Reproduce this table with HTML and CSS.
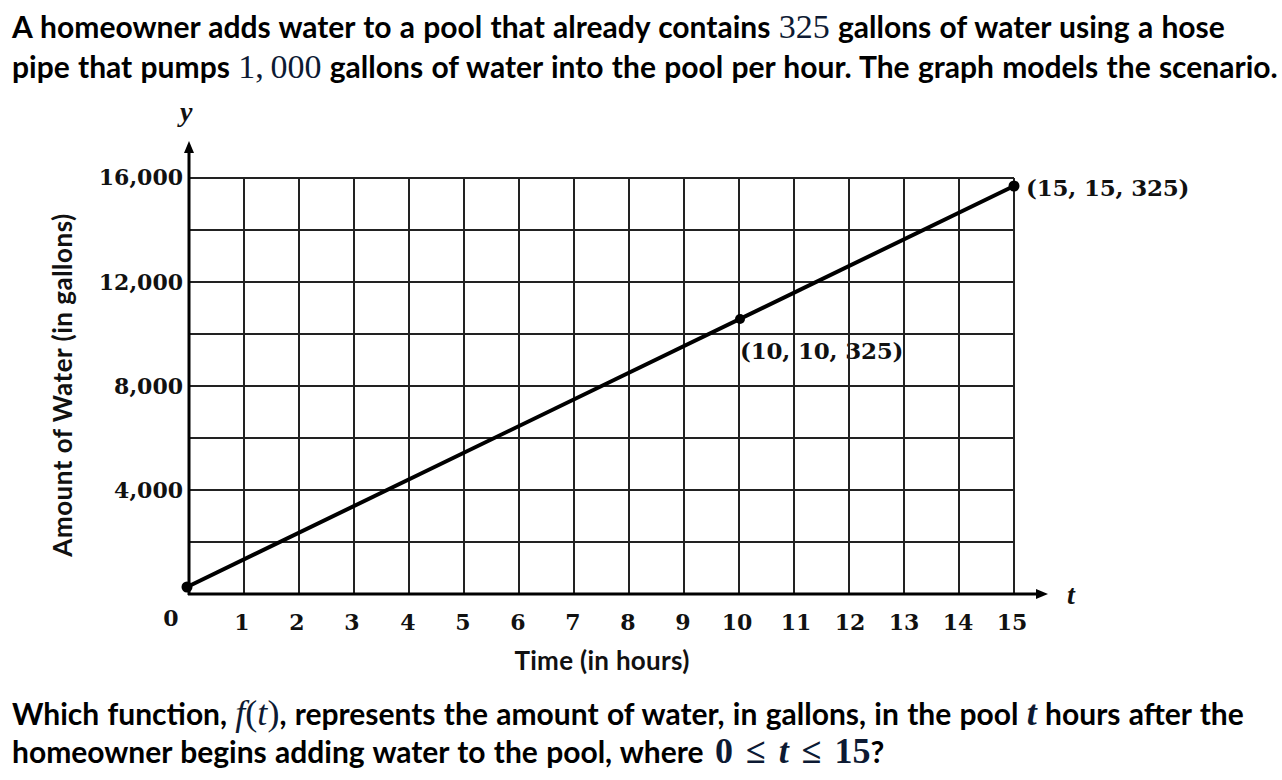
FILE: index.html
```html
<!DOCTYPE html>
<html>
<head>
<meta charset="utf-8">
<link rel="stylesheet" href="styles.css">
</head>
<body>
<div class="page">
  <p class="q q-top">A homeowner adds water to a pool that already contains <span class="m">325</span> gallons of water using a hose<br>pipe that pumps <span class="m">1,&thinsp;000</span> gallons of water into the pool per hour. The graph models the scenario.</p>
  <svg class="graph" width="1282" height="608" viewBox="0 86 1282 608" xmlns="http://www.w3.org/2000/svg">
    <g class="pt-label">
      <text x="1026" y="196">(15, 15, 325)</text>
      <text x="740" y="359">(10, 10, 325)</text>
    </g>
    <g class="grid">
      <line x1="244" y1="178" x2="244" y2="594"/>
      <line x1="299" y1="178" x2="299" y2="594"/>
      <line x1="354" y1="178" x2="354" y2="594"/>
      <line x1="409" y1="178" x2="409" y2="594"/>
      <line x1="464" y1="178" x2="464" y2="594"/>
      <line x1="519" y1="178" x2="519" y2="594"/>
      <line x1="574" y1="178" x2="574" y2="594"/>
      <line x1="629" y1="178" x2="629" y2="594"/>
      <line x1="684" y1="178" x2="684" y2="594"/>
      <line x1="739" y1="178" x2="739" y2="594"/>
      <line x1="794" y1="178" x2="794" y2="594"/>
      <line x1="849" y1="178" x2="849" y2="594"/>
      <line x1="904" y1="178" x2="904" y2="594"/>
      <line x1="959" y1="178" x2="959" y2="594"/>
      <line x1="1014" y1="178" x2="1014" y2="594"/>
      <line x1="189" y1="178" x2="1014" y2="178"/>
      <line x1="189" y1="230" x2="1014" y2="230"/>
      <line x1="189" y1="282" x2="1014" y2="282"/>
      <line x1="189" y1="334" x2="1014" y2="334"/>
      <line x1="189" y1="386" x2="1014" y2="386"/>
      <line x1="189" y1="438" x2="1014" y2="438"/>
      <line x1="189" y1="490" x2="1014" y2="490"/>
      <line x1="189" y1="542" x2="1014" y2="542"/>
    </g>
    <g class="axis">
      <line x1="189" y1="595" x2="189" y2="150"/>
      <line x1="188" y1="594" x2="1040" y2="594"/>
    </g>
    <polygon class="arrow" points="189,141 184,153 194,153"/>
    <polygon class="arrow" points="1048,594 1036,589 1036,599"/>
    <line class="fn" x1="187" y1="587" x2="1014" y2="186"/>
    <circle class="dot" cx="187" cy="587" r="5.5"/>
    <circle class="dot" cx="740" cy="319" r="5"/>
    <circle class="dot" cx="1014" cy="186" r="5.5"/>
    <text class="var" x="180" y="121">y</text>
    <text class="var" x="1067" y="604">t</text>
    <g class="ytick">
      <text x="183" y="185">16,000</text>
      <text x="183" y="290">12,000</text>
      <text x="183" y="394">8,000</text>
      <text x="183" y="498">4,000</text>
    </g>
    <g class="xtick">
      <text x="171" y="626">0</text>
      <text x="242" y="630">1</text>
      <text x="297" y="630">2</text>
      <text x="352" y="630">3</text>
      <text x="408" y="630">4</text>
      <text x="463" y="630">5</text>
      <text x="518" y="630">6</text>
      <text x="573" y="630">7</text>
      <text x="628" y="630">8</text>
      <text x="683" y="630">9</text>
      <text x="737" y="630">10</text>
      <text x="796" y="630">11</text>
      <text x="850" y="630">12</text>
      <text x="904" y="630">13</text>
      <text x="958" y="630">14</text>
      <text x="1012" y="630">15</text>
    </g>
    <text class="axis-title axis-title-x" x="602" y="670">Time (in hours)</text>
    <text class="axis-title axis-title-y" transform="translate(72 385) rotate(-90)" x="0" y="0">Amount of Water (in gallons)</text>
  </svg>
  <p class="q q-bottom">Which function, <span class="m mb-lg mi">f</span><span class="m mb-lg">(</span><span class="m mb-lg mi">t</span><span class="m mb-lg">)</span>, represents the amount of water, in gallons, in the pool <span class="m mb-lg mi mb">t</span> hours after the<br>homeowner begins adding water to the pool, where <span class="m mb-lg mb ineq">0 ≤ <span class="mi">t</span> ≤ 15</span>?</p>
</div>
</body>
</html>
```

FILE: styles.css
```css
html, body {
  margin: 0;
  padding: 0;
  background: #ffffff;
}

.page {
  width: 1282px;
  height: 780px;
  overflow: hidden;
  color: #000;
}

.q {
  margin: 0;
  padding: 0 0 0 12px;
  font-family: Lato, "Liberation Sans", sans-serif;
  font-weight: 700;
  font-size: 30px;
  line-height: 40px;
  word-spacing: 1px;
  white-space: nowrap;
  color: #000;
}

.q-top {
  padding-top: 6px;
}

.q-bottom {
  line-height: 38px;
}

.m {
  font-family: "Liberation Serif", serif;
  font-weight: 400;
  font-size: 34px;
  line-height: 1;
  word-spacing: 0;
  color: #0d1a33;
}

.mb-lg {
  font-size: 36px;
}

.mi {
  font-style: italic;
}

.mb {
  font-weight: 700;
}

.ineq {
  word-spacing: 4px;
  padding-left: 3px;
}

.graph {
  display: block;
}

.grid line {
  stroke: #222;
  stroke-width: 2;
}

.axis line {
  stroke: #000;
  stroke-width: 3;
}

.arrow {
  fill: #000;
}

.fn {
  stroke: #000;
  stroke-width: 4;
}

.dot {
  fill: #000;
}

.pt-label text,
.ytick text,
.xtick text {
  font-family: "DejaVu Serif", serif;
  font-weight: 700;
  font-size: 22px;
  fill: #111;
}

.pt-label text {
  font-size: 23px;
  letter-spacing: -0.2px;
}

.ytick text {
  text-anchor: end;
}

.xtick text {
  text-anchor: middle;
}

.var {
  font-family: "Liberation Serif", serif;
  font-style: italic;
  font-weight: 700;
  font-size: 28px;
  fill: #111;
}

.axis-title {
  font-family: Lato, "Liberation Sans", sans-serif;
  font-weight: 700;
  font-size: 26px;
  text-anchor: middle;
  fill: #111;
}

.axis-title-x {
  letter-spacing: 0.3px;
}

.axis-title-y {
  letter-spacing: 0.5px;
}
```
